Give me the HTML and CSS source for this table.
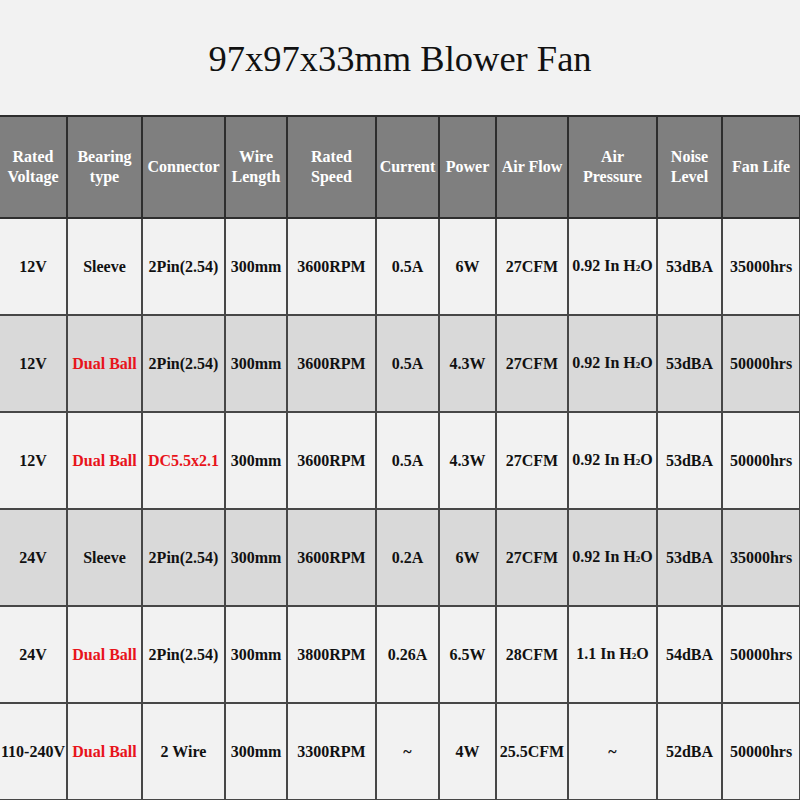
FILE: index.html
```html
<!DOCTYPE html>
<html>
<head>
<meta charset="utf-8">
<link rel="stylesheet" href="styles.css">
</head>
<body>
<div class="title">97x97x33mm Blower Fan</div>
<table class="spec">
  <colgroup>
    <col class="c1"><col class="c2"><col class="c3"><col class="c4"><col class="c5"><col class="c6"><col class="c7"><col class="c8"><col class="c9"><col class="c10"><col class="c11">
  </colgroup>
  <thead>
    <tr>
      <th>Rated<br>Voltage</th>
      <th>Bearing<br>type</th>
      <th>Connector</th>
      <th>Wire<br>Length</th>
      <th>Rated<br>Speed</th>
      <th>Current</th>
      <th>Power</th>
      <th>Air Flow</th>
      <th>Air<br>Pressure</th>
      <th>Noise<br>Level</th>
      <th>Fan Life</th>
    </tr>
  </thead>
  <tbody>
    <tr class="light">
      <td>12V</td><td>Sleeve</td><td>2Pin(2.54)</td><td>300mm</td><td>3600RPM</td><td>0.5A</td><td>6W</td><td>27CFM</td><td>0.92 In H<span class="sub">2</span>O</td><td>53dBA</td><td>35000hrs</td>
    </tr>
    <tr class="dark">
      <td>12V</td><td class="red">Dual Ball</td><td>2Pin(2.54)</td><td>300mm</td><td>3600RPM</td><td>0.5A</td><td>4.3W</td><td>27CFM</td><td>0.92 In H<span class="sub">2</span>O</td><td>53dBA</td><td>50000hrs</td>
    </tr>
    <tr class="light">
      <td>12V</td><td class="red">Dual Ball</td><td class="red">DC5.5x2.1</td><td>300mm</td><td>3600RPM</td><td>0.5A</td><td>4.3W</td><td>27CFM</td><td>0.92 In H<span class="sub">2</span>O</td><td>53dBA</td><td>50000hrs</td>
    </tr>
    <tr class="dark">
      <td>24V</td><td>Sleeve</td><td>2Pin(2.54)</td><td>300mm</td><td>3600RPM</td><td>0.2A</td><td>6W</td><td>27CFM</td><td>0.92 In H<span class="sub">2</span>O</td><td>53dBA</td><td>35000hrs</td>
    </tr>
    <tr class="light">
      <td>24V</td><td class="red">Dual Ball</td><td>2Pin(2.54)</td><td>300mm</td><td>3800RPM</td><td>0.26A</td><td>6.5W</td><td>28CFM</td><td>1.1 In H<span class="sub">2</span>O</td><td>54dBA</td><td>50000hrs</td>
    </tr>
    <tr class="light">
      <td>110-240V</td><td class="red">Dual Ball</td><td>2 Wire</td><td>300mm</td><td>3300RPM</td><td>~</td><td>4W</td><td>25.5CFM</td><td>~</td><td>52dBA</td><td>50000hrs</td>
    </tr>
  </tbody>
</table>
</body>
</html>
```

FILE: styles.css
```css
html, body {
  margin: 0;
  padding: 0;
  background: #f2f2f2;
  font-family: "Liberation Serif", "Times New Roman", serif;
}

.title {
  height: 115px;
  display: flex;
  align-items: center;
  justify-content: center;
  font-size: 36.5px;
  color: #111;
  padding-top: 2px;
  box-sizing: border-box;
}

.spec {
  width: 800px;
  table-layout: fixed;
  border-collapse: collapse;
}

.c1 { width: 67px; }
.c2 { width: 75px; }
.c3 { width: 83px; }
.c4 { width: 62px; }
.c5 { width: 89px; }
.c6 { width: 63px; }
.c7 { width: 57px; }
.c8 { width: 72px; }
.c9 { width: 89px; }
.c10 { width: 65px; }
.c11 { width: 78px; }

.spec th,
.spec td {
  border: 2px solid #474747;
  padding: 0;
  text-align: center;
  vertical-align: middle;
  font-weight: bold;
  font-size: 16px;
  line-height: 20px;
  white-space: nowrap;
}

.spec th:first-child,
.spec td:first-child {
  border-left: none;
}

.spec thead tr {
  height: 102px;
}

.spec th {
  background: #7f7f7f;
  color: #ffffff;
  border-color: #2e2e2e;
}

.spec tbody tr {
  height: 97px;
}

.spec td {
  color: #111;
}

.spec tr.light td {
  background: #f2f2f2;
}

.spec tr.dark td {
  background: #d9d9d9;
}

.spec td.red {
  color: #e8141b;
}

.sub {
  font-size: 9px;
  vertical-align: 0;
}
```
